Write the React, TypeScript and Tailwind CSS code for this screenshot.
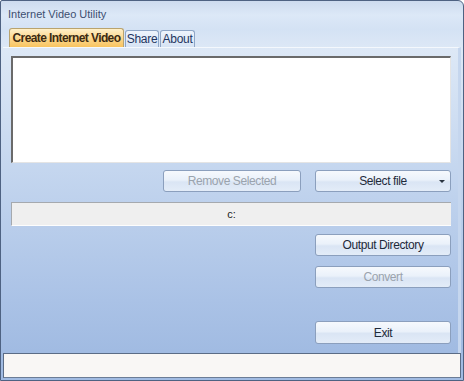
import React from "react";

function Btn({
  label,
  disabled,
  className = "",
  arrow,
}: {
  label: string;
  disabled?: boolean;
  className?: string;
  arrow?: boolean;
}) {
  return (
    <div
      className={
        "relative flex items-center justify-center rounded-[3px] border border-[#8b9fbd] bg-[linear-gradient(to_bottom,#f6f9fd_0%,#eaf1fa_45%,#dae5f4_55%,#e3ecf8_100%)] text-[12px] tracking-[-0.4px] " +
        (disabled ? "text-[#9aa3ad] " : "text-[#1e2a3a] ") +
        className
      }
    >
      <span>{label}</span>
      {arrow && (
        <svg
          className="absolute right-[5px] top-[9px]"
          width="6"
          height="4"
          viewBox="0 0 6 4"
        >
          <path d="M0 0 L6 0 L3 3 Z" fill="#2a3441" />
        </svg>
      )}
    </div>
  );
}

export default function App() {
  return (
    <div
      className="w-[464px] h-[381px] flex flex-col border border-[#4e6282] rounded-tr-[6px] rounded-tl-[2px] bg-[linear-gradient(to_bottom,#cddbee_0px,#dce8f7_14px,#d4e2f4_28px,#dde8f6_48px,#c8d9f0_150px,#aac2e6_300px,#a1bbe2_350px)] overflow-hidden"
      style={{ fontFamily: '"Liberation Sans", Arial, sans-serif' }}
    >
      {/* title */}
      <div className="h-[27px] flex items-center pl-[7px] text-[11px] text-[#3d4f70]">
        Internet Video Utility
      </div>
      {/* tabs */}
      <div className="h-[19px] flex items-end pl-[8px] gap-[1px]">
        <div className="h-[19px] w-[115px] flex items-center justify-center rounded-t-[3px] border border-b-0 border-[#b9a36e] bg-[linear-gradient(to_bottom,#fff0c8_0%,#fcd890_50%,#f8c460_100%)] text-[12px] font-bold text-[#3b2a12] tracking-[-0.6px]">
          Create Internet Video
        </div>
        <div className="h-[17px] w-[34px] flex items-center justify-center rounded-t-[3px] border border-b-0 border-[#8fa6c6] bg-[linear-gradient(to_bottom,#eef4fc,#d6e3f4)] text-[12px] tracking-[-0.3px] text-[#1f3560]">
          Share
        </div>
        <div className="h-[17px] w-[35px] flex items-center justify-center rounded-t-[3px] border border-b-0 border-[#8fa6c6] bg-[linear-gradient(to_bottom,#eef4fc,#d6e3f4)] text-[12px] tracking-[-0.3px] text-[#1f3560]">
          About
        </div>
      </div>
      {/* panel */}
      <div className="flex-1 mx-[2px] border-t border-[#f4f8fd] border-r-[3px] border-r-[#c5d6ee] flex flex-col pl-[8px] pr-[7px]">
        <div className="mt-[8px] h-[107px] bg-white border-t-2 border-l-2 border-[#6a6a6a] border-r border-b border-r-[#e4e4e4] border-b-[#e4e4e4]" />
        <div className="mt-[7px] h-[22px] flex">
          <Btn label="Remove Selected" disabled className="ml-[152px] w-[138px]" />
          <Btn label="Select file" arrow className="ml-[14px] w-[136px]" />
        </div>
        <div className="mt-[10px] h-[24px] flex items-center justify-center bg-[#efefef] border-t border-[#a5a9ae] border-l border-l-[#a5a9ae] border-b border-b-[#fdfdfd] text-[11px] text-[#222]">
          c:
        </div>
        <div className="flex flex-col items-end">
          <Btn label="Output Directory" className="mt-[8px] w-[136px] h-[22px]" />
          <Btn label="Convert" disabled className="mt-[10px] w-[136px] h-[22px]" />
          <Btn label="Exit" className="mt-[33px] w-[136px] h-[23px]" />
        </div>
      </div>
      {/* status */}
      <div className="h-[25px] mx-[2px] mb-[2px] bg-[#f9f7f5] border border-[#5b6c86] border-b-[#6c7d96]" />
    </div>
  );
}
